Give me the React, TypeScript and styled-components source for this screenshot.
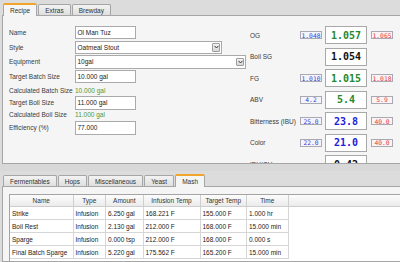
import React from "react";
import styled, { createGlobalStyle, css } from "styled-components";

const Global = createGlobalStyle`
  html, body { margin: 0; padding: 0; background: #dcdcdc; }
  body {
    font-family: "Liberation Sans", Arial, sans-serif;
    font-size: 6.5px;
    color: #333;
  }
  * { box-sizing: border-box; }
`;

const Root = styled.div`
  width: 400px;
  height: 262px;
  overflow: hidden;
  display: flex;
  flex-direction: column;
  background: #dcdcdc;
`;

const TabWidget = styled.div<{ $grow?: boolean }>`
  display: flex;
  flex-direction: column;
  ${(p) => (p.$grow ? "flex: 1; min-height: 0;" : "flex-shrink: 0;")}
`;

const TabBar = styled.div`
  display: flex;
  align-items: flex-end;
  gap: 1px;
  height: 15px;
  padding-left: 3px;
  flex-shrink: 0;
`;

const Tab = styled.div<{ $active?: boolean }>`
  height: 11px;
  padding: 0 6px;
  border: 1px solid #a6a6a6;
  border-bottom: none;
  border-radius: 2px 2px 0 0;
  display: flex;
  align-items: center;
  white-space: nowrap;
  color: #333;
  background: linear-gradient(#f3f3f3, #dfdfdf);
  ${(p) =>
    p.$active &&
    css`
      height: 13px;
      margin-bottom: -1px;
      padding-top: 0px;
      background: #f5f5f5;
      border-top: 2px solid #f2a52b;
      position: relative;
      z-index: 1;
    `}
`;

const Pane = styled.div<{ $h?: number }>`
  margin-left: 2px;
  border: 1px solid #a6a6a6;
  border-right: none;
  background: #f5f5f5;
  overflow: hidden;
  ${(p) => (p.$h ? `height: ${p.$h}px; flex-shrink: 0;` : "flex: 1; min-height: 0;")}
`;

const RecipeBody = styled.div`
  display: flex;
  gap: 4px;
  padding: 9.5px 0 0 6px;
`;

const Form = styled.div`
  width: 237px;
  display: flex;
  flex-direction: column;
`;

const FormRow = styled.div<{ $h: number }>`
  display: flex;
  align-items: flex-start;
  height: ${(p) => p.$h}px;
`;

const FieldLabel = styled.div<{ $calc?: boolean }>`
  width: 66px;
  height: ${(p) => (p.$calc ? "100%" : "13.5px")};
  display: flex;
  align-items: center;
  white-space: nowrap;
  color: #3a3a3a;
`;

const Input = styled.div<{ $w: number }>`
  width: ${(p) => p.$w}px;
  height: 13.5px;
  border: 1px solid #aaaaaa;
  background: #fff;
  padding-left: 1.5px;
  display: flex;
  align-items: center;
  color: #222;
  white-space: nowrap;
`;

const ComboArrow = styled.div`
  margin-left: auto;
  margin-right: 1px;
  width: 8px;
  height: 8.5px;
  border: 1px solid #9c9c9c;
  border-radius: 1px;
  background: linear-gradient(#f6f6f6, #d6d6d6);
  display: flex;
  align-items: center;
  justify-content: center;
`;

const CalcValue = styled.div`
  height: 100%;
  display: flex;
  align-items: center;
  color: #4c9a3c;
`;

const Stats = styled.div`
  display: flex;
  flex-direction: column;
  gap: 3.5px;
  margin-top: 0.5px;
`;

const StatRow = styled.div`
  display: flex;
  align-items: center;
  height: 18px;
  flex-shrink: 0;
`;

const StatLabel = styled.div`
  width: 50px;
  white-space: nowrap;
  color: #3a3a3a;
`;

const RangeBox = styled.div<{ $kind: "low" | "high"; $empty?: boolean }>`
  width: 22px;
  height: 8px;
  border: 1px solid #a9a9b4;
  background: ${(p) => (p.$kind === "low" ? "#f4f4fb" : "#fbf3f4")};
  color: ${(p) => (p.$kind === "low" ? "#3838d8" : "#e03848")};
  font-family: "DejaVu Sans Mono", monospace;
  font-size: 6.3px;
  display: flex;
  align-items: center;
  justify-content: center;
  ${(p) => p.$empty && "visibility: hidden;"}
`;

const ValueBox = styled.div<{ $color: string }>`
  width: 42px;
  height: 18px;
  margin: 0 4px 0 3px;
  border: 1px solid #a8a8a8;
  background: #fff;
  color: ${(p) => p.$color};
  font-family: "DejaVu Sans Mono", monospace;
  font-weight: bold;
  font-size: 10px;
  display: flex;
  align-items: center;
  justify-content: center;
`;

const Splitter = styled.div`
  height: 7px;
  flex-shrink: 0;
  background: #d8d8d8;
`;

const MashBody = styled.div`
  height: 100%;
  padding: 7px 0 0 6px;
  display: flex;
`;

const TableView = styled.div`
  flex: 1;
  background: #fff;
  border-left: 1px solid #a4a4a4;
  border-top: 1px solid #a4a4a4;
  overflow: hidden;
`;

const HeaderRow = styled.div`
  display: flex;
  height: 12px;
  background: linear-gradient(#fcfcfc, #ebebeb);
  border-bottom: 1px solid #cdcdcd;
`;

const HeaderCell = styled.div<{ $w: number }>`
  width: ${(p) => p.$w}px;
  flex-shrink: 0;
  border-right: 1px solid #cfcfcf;
  display: flex;
  align-items: center;
  justify-content: center;
  white-space: nowrap;
  color: #333;
`;

const Row = styled.div`
  display: flex;
  height: 13px;
`;

const Cell = styled.div<{ $w: number }>`
  width: ${(p) => p.$w}px;
  flex-shrink: 0;
  border-right: 1px solid #d6d6d6;
  border-bottom: 1px solid #d6d6d6;
  padding-left: 2px;
  display: flex;
  align-items: center;
  white-space: nowrap;
  color: #222;
`;

const Chevron = () => (
  <svg width="5" height="4" viewBox="0 0 5 4">
    <path d="M0.5 0.8 L2.5 3 L4.5 0.8" fill="none" stroke="#333" strokeWidth="1" />
  </svg>
);

type Stat = {
  label: string;
  low?: string;
  value: string;
  color: string;
  high?: string;
};

const stats: Stat[] = [
  { label: "OG", low: "1.048", value: "1.057", color: "#24892a", high: "1.065" },
  { label: "Boil SG", value: "1.054", color: "#111" },
  { label: "FG", low: "1.010", value: "1.015", color: "#24892a", high: "1.018" },
  { label: "ABV", low: "4.2", value: "5.4", color: "#24892a", high: "5.9" },
  { label: "Bitterness (IBU)", low: "25.0", value: "23.8", color: "#1c1cdc", high: "40.0" },
  { label: "Color", low: "22.0", value: "21.0", color: "#1c1cdc", high: "40.0" },
  { label: "IBU/GU", value: "0.42", color: "#111" },
];

const cols = [63.5, 32.5, 37.5, 57, 46.5, 41.5];
const headers = ["Name", "Type", "Amount", "Infusion Temp", "Target Temp", "Time"];
const steps = [
  ["Strike", "Infusion", "6.250 gal", "168.221 F", "155.000 F", "1.000 hr"],
  ["Boil Rest", "Infusion", "2.130 gal", "212.000 F", "168.000 F", "15.000 min"],
  ["Sparge", "Infusion", "0.000 tsp", "212.000 F", "168.000 F", "0.000 s"],
  ["Final Batch Sparge", "Infusion", "5.220 gal", "175.562 F", "165.200 F", "15.000 min"],
];

export default function App() {
  return (
    <>
      <Global />
      <Root>
        <TabWidget>
          <TabBar>
            <Tab $active>Recipe</Tab>
            <Tab>Extras</Tab>
            <Tab>Brewday</Tab>
          </TabBar>
          <Pane $h={149}>
            <RecipeBody>
              <Form>
                <FormRow $h={15}>
                  <FieldLabel>Name</FieldLabel>
                  <Input $w={61}>Ol Man Tuz</Input>
                </FormRow>
                <FormRow $h={14.5}>
                  <FieldLabel>Style</FieldLabel>
                  <Input $w={147}>
                    Oatmeal Stout
                    <ComboArrow>
                      <Chevron />
                    </ComboArrow>
                  </Input>
                </FormRow>
                <FormRow $h={14.5}>
                  <FieldLabel>Equipment</FieldLabel>
                  <Input $w={171}>
                    10gal
                    <ComboArrow>
                      <Chevron />
                    </ComboArrow>
                  </Input>
                </FormRow>
                <FormRow $h={14.5}>
                  <FieldLabel>Target Batch Size</FieldLabel>
                  <Input $w={61}>10.000 gal</Input>
                </FormRow>
                <FormRow $h={12}>
                  <FieldLabel $calc>Calculated Batch Size</FieldLabel>
                  <CalcValue>10.000 gal</CalcValue>
                </FormRow>
                <FormRow $h={12.5}>
                  <FieldLabel>Target Boil Size</FieldLabel>
                  <Input $w={61}>11.000 gal</Input>
                </FormRow>
                <FormRow $h={12.5}>
                  <FieldLabel $calc>Calculated Boil Size</FieldLabel>
                  <CalcValue>11.000 gal</CalcValue>
                </FormRow>
                <FormRow $h={13.5}>
                  <FieldLabel>Efficiency (%)</FieldLabel>
                  <Input $w={61}>77.000</Input>
                </FormRow>
              </Form>
              <Stats>
                {stats.map((s) => (
                  <StatRow key={s.label}>
                    <StatLabel>{s.label}</StatLabel>
                    <RangeBox $kind="low" $empty={!s.low}>
                      {s.low}
                    </RangeBox>
                    <ValueBox $color={s.color}>{s.value}</ValueBox>
                    <RangeBox $kind="high" $empty={!s.high}>
                      {s.high}
                    </RangeBox>
                  </StatRow>
                ))}
              </Stats>
            </RecipeBody>
          </Pane>
        </TabWidget>
        <Splitter />
        <TabWidget $grow>
          <TabBar>
            <Tab>Fermentables</Tab>
            <Tab>Hops</Tab>
            <Tab>Miscellaneous</Tab>
            <Tab>Yeast</Tab>
            <Tab $active>Mash</Tab>
          </TabBar>
          <Pane>
            <MashBody>
              <TableView>
                <HeaderRow>
                  {headers.map((h, i) => (
                    <HeaderCell key={h} $w={cols[i]}>
                      {h}
                    </HeaderCell>
                  ))}
                </HeaderRow>
                {steps.map((r) => (
                  <Row key={r[0]}>
                    {r.map((c, i) => (
                      <Cell key={i} $w={cols[i]}>
                        {c}
                      </Cell>
                    ))}
                  </Row>
                ))}
              </TableView>
            </MashBody>
          </Pane>
        </TabWidget>
      </Root>
    </>
  );
}
